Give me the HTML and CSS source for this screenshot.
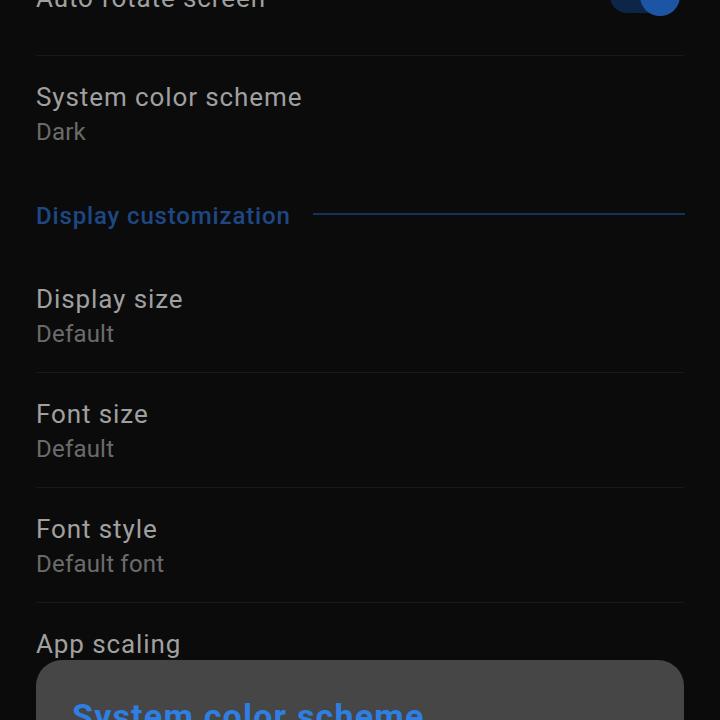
FILE: index.html
```html
<!DOCTYPE html>
<html lang="en">
<head>
<meta charset="utf-8">
<title>Display settings</title>
<link rel="stylesheet" href="styles.css">
</head>
<body>
<div class="screen">
  <div class="list">
    <div class="row row-toggle">
      <div class="texts">
        <div class="title">Auto-rotate screen</div>
      </div>
      <div class="toggle">
        <span class="track"></span>
        <span class="thumb"></span>
      </div>
    </div>
    <div class="row last">
      <div class="texts">
        <div class="title">System color scheme</div>
        <div class="sub">Dark</div>
      </div>
    </div>
    <div class="section">
      <span class="section-label">Display customization</span>
      <span class="section-line"></span>
    </div>
    <div class="row">
      <div class="texts">
        <div class="title">Display size</div>
        <div class="sub">Default</div>
      </div>
    </div>
    <div class="row">
      <div class="texts">
        <div class="title">Font size</div>
        <div class="sub">Default</div>
      </div>
    </div>
    <div class="row">
      <div class="texts">
        <div class="title">Font style</div>
        <div class="sub">Default font</div>
      </div>
    </div>
    <div class="row">
      <div class="texts">
        <div class="title">App scaling</div>
      </div>
    </div>
  </div>
  <div class="dialog">
    <div class="dialog-title">System color scheme</div>
  </div>
</div>
</body>
</html>
```
FILE: styles.css
```css
html, body {
  margin: 0;
  padding: 0;
  background: #0b0b0b;
}
body {
  font-family: Roboto, "Noto Sans", "Liberation Sans", sans-serif;
  overflow: hidden;
}
.screen {
  position: relative;
  width: 720px;
  height: 720px;
  overflow: hidden;
}
.list {
  display: flex;
  flex-direction: column;
  margin: -43px 36px 0 36px;
}
.row {
  display: flex;
  justify-content: space-between;
  align-items: flex-start;
  padding: 24px 0 22px 0;
  border-bottom: 1px solid #191919;
}
.row.last {
  border-bottom: none;
}
.row-toggle {
  padding-bottom: 39px;
}
.texts {
  display: flex;
  flex-direction: column;
  gap: 2px;
}
.title {
  font-size: 26px;
  line-height: 34px;
  color: #a0a0a0;
  letter-spacing: 0.9px;
}
.sub {
  font-size: 24px;
  line-height: 32px;
  color: #6b6b6b;
  letter-spacing: 0.2px;
}
.toggle {
  position: relative;
  width: 70px;
  height: 40px;
  margin-top: -5px;
  margin-right: 4px;
}
.track {
  position: absolute;
  left: 0;
  top: 3px;
  width: 66px;
  height: 34px;
  border-radius: 17px;
  background: #0d2647;
}
.thumb {
  position: absolute;
  right: 0;
  top: 0;
  width: 40px;
  height: 40px;
  border-radius: 50%;
  background: #1d55a5;
}
.section {
  display: flex;
  align-items: center;
  gap: 22px;
  padding: 30px 0 26px 0;
}
.section-label {
  font-size: 24px;
  line-height: 32px;
  font-weight: 500;
  color: #1d4884;
  letter-spacing: 0.85px;
  white-space: nowrap;
}
.section-line {
  flex: 1;
  height: 2px;
  background: #15325a;
  margin-top: -4px;
  margin-right: -1px;
}
.dialog {
  position: absolute;
  left: 36px;
  top: 660px;
  width: 648px;
  height: 200px;
  box-sizing: border-box;
  padding: 35px 36px 0 36px;
  border-radius: 26px;
  background: #464646;
}
.dialog-title {
  font-size: 34px;
  line-height: 42px;
  font-weight: 700;
  color: #2f7fe2;
  letter-spacing: 1.2px;
  white-space: nowrap;
}
```
